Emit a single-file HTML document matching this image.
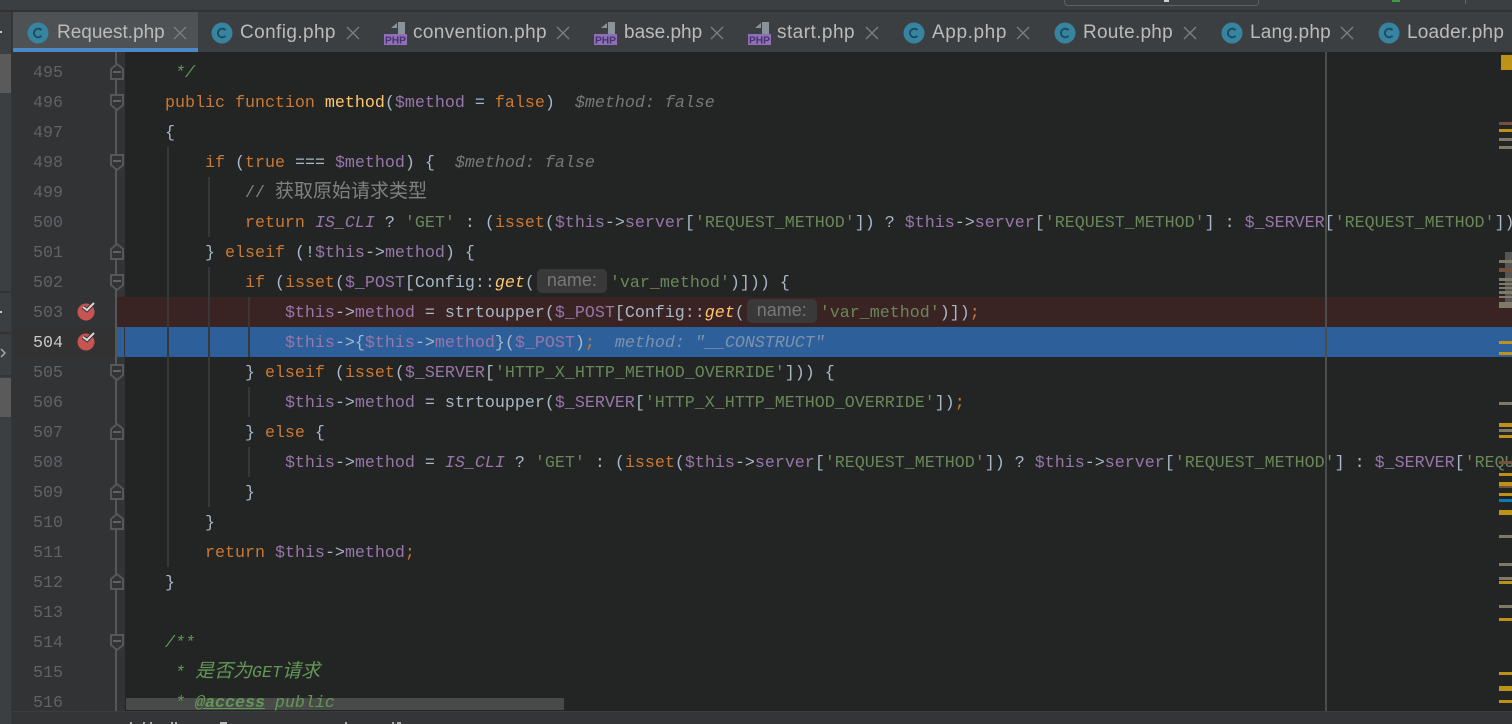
<!DOCTYPE html>
<html><head><meta charset="utf-8">
<style>
html,body{margin:0;padding:0;background:#232525;}
#r{position:relative;width:1512px;height:724px;overflow:hidden;background:#232525;font-family:"Liberation Mono","Noto Sans CJK SC",monospace;}
.a{position:absolute;}
.l{position:absolute;left:125px;margin-top:2px;height:30px;line-height:30px;font-size:16.67px;white-space:pre;color:#a9b7c6;font-family:"Liberation Mono","Noto Sans CJK SC",monospace;}
.n{position:absolute;left:33px;margin-top:2px;height:30px;line-height:30px;font-size:16.67px;color:#606366;}
.k{color:#cc7832}.v{color:#9876aa}.s{color:#6a8759}.f{color:#ffc66d}.g{color:#ffc66d;font-style:italic}
.i{font-style:italic}.c{color:#808080}.d{color:#629755;font-style:italic}
.h{color:#787878;font-style:italic}
.z{font-size:19px;line-height:20px}
.p{display:inline-block;box-sizing:border-box;width:70px;height:24px;background:#393939;border-radius:5px;color:#787878;font:18px/23px "Liberation Sans",sans-serif;text-align:center;vertical-align:1px;margin:0 3px 0 2px;}
.t{position:absolute;top:20px;height:26px;font:19px/26px "Liberation Sans",sans-serif;color:#bbbbbb;white-space:pre;}
.m{position:absolute;left:1499px;width:13px;}
.go{background:#be9117}.gr{background:#7f7a68}.br{background:#74503f}
</style></head><body><div id="r">
<!-- top bar -->
<div class="a" style="left:0;top:0;width:1512px;height:10px;background:#3c3f41"></div>
<div class="a" style="left:0;top:10px;width:1512px;height:2px;background:#323232"></div>
<div class="a" style="left:1064px;top:-8px;width:193px;height:12px;border:1px solid #5e6060;border-radius:4px"></div>
<div class="a" style="left:1164px;top:0;width:5px;height:2px;background:#cfcfcf"></div>
<div class="a" style="left:1392px;top:0;width:8px;height:2px;background:#3f9e42"></div>
<div class="a" style="left:1465px;top:0;width:1px;height:4px;background:#666"></div>
<!-- left strip -->
<div class="a" style="left:0;top:12px;width:13px;height:712px;background:#3c3f41"></div>
<div class="a" style="left:11px;top:12px;width:2px;height:712px;background:#323436"></div>
<div class="a" style="left:0;top:54px;width:11px;height:39px;background:#5a5a5a"></div>
<div class="a" style="left:0;top:378px;width:11px;height:39px;background:#5a5a5a"></div>
<div class="a" style="left:0;top:291px;width:11px;height:2px;background:#323436"></div>
<div class="a" style="left:0;top:332px;width:11px;height:2px;background:#323436"></div>
<div class="a" style="left:0;top:375px;width:11px;height:2px;background:#323436"></div>
<div class="a" style="left:0;top:31px;width:2px;height:2px;background:#c8c8c8"></div>
<div class="a" style="left:0;top:311px;width:2px;height:2px;background:#c8c8c8"></div>
<svg class="a" style="left:0;top:346px" width="8" height="14"><path d="M1 3L5 7L1 11" fill="none" stroke="#b0b0b0" stroke-width="1.3"/></svg>
<!-- tabs -->
<div class="a" style="left:13px;top:12px;width:1499px;height:40px;background:#3c3f41"></div>
<div class="a" style="left:13px;top:12px;width:185px;height:36px;background:#4e5254"></div>
<div class="a" style="left:13px;top:48px;width:185px;height:4px;background:#4a88c7"></div>
<svg class="a" style="left:0;top:12px" width="1512" height="40">
<g fill="#36849f">
<circle cx="38" cy="21" r="10.5"/><circle cx="222" cy="21" r="10.5"/><circle cx="914" cy="21" r="10.5"/><circle cx="1065" cy="21" r="10.5"/><circle cx="1232" cy="21" r="10.5"/><circle cx="1389" cy="21" r="10.5"/>
</g>
<g fill="none" stroke="#1d4a5e" stroke-width="1.8">
<path d="M41.5 18.2A4.3 4.3 0 1 0 41.5 23.8"/><path d="M225.5 18.2A4.3 4.3 0 1 0 225.5 23.8"/><path d="M917.5 18.2A4.3 4.3 0 1 0 917.5 23.8"/><path d="M1068.5 18.2A4.3 4.3 0 1 0 1068.5 23.8"/><path d="M1235.5 18.2A4.3 4.3 0 1 0 1235.5 23.8"/><path d="M1392.5 18.2A4.3 4.3 0 1 0 1392.5 23.8"/>
</g>
<g fill="none" stroke="#7b7e80" stroke-width="1.4">
<path d="M174 15L186 27M186 15L174 27"/><path d="M347 15L359 27M359 15L347 27"/><path d="M557 15L569 27M569 15L557 27"/><path d="M711 15L723 27M723 15L711 27"/><path d="M866 15L878 27M878 15L866 27"/><path d="M1017 15L1029 27M1029 15L1017 27"/><path d="M1184 15L1196 27M1196 15L1184 27"/><path d="M1341 15L1353 27M1353 15L1341 27"/>
</g>
<g fill="#8a9399">
<path d="M391 22V16L397 11V16H391ZM398 10H405V22H398Z"/><path d="M601 22V16L607 11V16H601ZM608 10H615V22H608Z"/><path d="M755 22V16L761 11V16H755ZM762 10H769V22H762Z"/>
</g>
<g fill="#8e6fb8">
<rect x="384" y="22" width="23" height="11"/><rect x="594" y="22" width="23" height="11"/><rect x="748" y="22" width="23" height="11"/>
</g>
<g font-family="Liberation Sans,sans-serif" font-size="10" fill="#46346a" font-weight="bold">
<text x="385" y="31.5" textLength="21" lengthAdjust="spacingAndGlyphs">PHP</text><text x="595" y="31.5" textLength="21" lengthAdjust="spacingAndGlyphs">PHP</text><text x="749" y="31.5" textLength="21" lengthAdjust="spacingAndGlyphs">PHP</text>
</g>
</svg>
<div class="t" style="left:57px">Request.php</div>
<div class="t" style="left:240px;letter-spacing:.4px">Config.php</div>
<div class="t" style="left:413px;letter-spacing:.36px">convention.php</div>
<div class="t" style="left:624px">base.php</div>
<div class="t" style="left:777px;letter-spacing:.45px">start.php</div>
<div class="t" style="left:932px;letter-spacing:.6px">App.php</div>
<div class="t" style="left:1083px;letter-spacing:.25px">Route.php</div>
<div class="t" style="left:1250px;letter-spacing:.2px">Lang.php</div>
<div class="t" style="left:1407px;letter-spacing:.2px">Loader.php</div>
<!-- gutter -->
<div class="a" style="left:13px;top:52px;width:112px;height:659px;background:#313335"></div>
<!-- rows -->
<div class="a" style="left:117px;top:297px;width:1395px;height:30px;background:#3a2323"></div>
<div class="a" style="left:117px;top:327px;width:1395px;height:30px;background:#2d5f9a"></div>
<div class="a" style="left:13px;top:327px;width:104px;height:30px;background:#323232"></div>
<!-- h-scrollbar -->
<div class="a" style="left:126px;top:698px;width:438px;height:12px;background:#484a49"></div>
<!-- guides -->
<div class="a" style="left:124px;top:327px;width:1px;height:30px;background:#313335"></div>
<div class="a" style="left:167px;top:147px;width:2px;height:420px;background:#373939"></div>
<div class="a" style="left:208px;top:177px;width:2px;height:60px;background:#373939"></div>
<div class="a" style="left:208px;top:267px;width:2px;height:240px;background:#373939"></div>
<div class="a" style="left:248px;top:297px;width:2px;height:60px;background:#373939"></div>
<div class="a" style="left:248px;top:387px;width:2px;height:30px;background:#373939"></div>
<div class="a" style="left:248px;top:447px;width:2px;height:30px;background:#373939"></div>
<div class="a" style="left:1325px;top:52px;width:2px;height:659px;background:#4c4e4e"></div>
<!-- line numbers -->
<div class="n" style="top:57px">495</div><div class="n" style="top:87px">496</div><div class="n" style="top:117px">497</div><div class="n" style="top:147px">498</div><div class="n" style="top:177px">499</div><div class="n" style="top:207px">500</div><div class="n" style="top:237px">501</div><div class="n" style="top:267px">502</div><div class="n" style="top:297px">503</div><div class="n" style="top:327px;color:#c8c8c8">504</div><div class="n" style="top:357px">505</div><div class="n" style="top:387px">506</div><div class="n" style="top:417px">507</div><div class="n" style="top:447px">508</div><div class="n" style="top:477px">509</div><div class="n" style="top:507px">510</div><div class="n" style="top:537px">511</div><div class="n" style="top:567px">512</div><div class="n" style="top:597px">513</div><div class="n" style="top:627px">514</div><div class="n" style="top:657px">515</div><div class="n" style="height:22px;overflow:hidden;top:687px">516</div>
<!-- fold + breakpoints -->
<svg class="a" style="left:0;top:52px" width="130" height="659">
<rect x="115" y="0" width="2" height="659" fill="#555759"/>
<g fill="#313335" stroke="#555759" stroke-width="2">
<path d="M111 27V17L117 12L123 17V27Z"/>
<path d="M111 43H123V53L117 58L111 53Z"/>
<path d="M111 103H123V113L117 118L111 113Z"/>
<path d="M111 207V197L117 192L123 197V207Z"/>
<path d="M111 223H123V233L117 238L111 233Z"/>
<path d="M111 313H123V323L117 328L111 323Z"/>
<path d="M111 387V377L117 372L123 377V387Z"/>
<path d="M111 447V437L117 432L123 437V447Z"/>
<path d="M111 477V467L117 462L123 467V477Z"/>
<path d="M111 537V527L117 522L123 527V537Z"/>
<path d="M111 583H123V593L117 598L111 593Z"/>
</g>
<g stroke="#606366" stroke-width="2">
<path d="M113 20H121M113 49H121M113 109H121M113 200H121M113 229H121M113 319H121M113 380H121M113 440H121M113 470H121M113 530H121M113 589H121"/>
</g>
<circle cx="86" cy="260" r="8.5" fill="#c75450"/><circle cx="86" cy="290" r="8.5" fill="#c75450"/>
<path d="M83 255L87 258L94 251" fill="none" stroke="#313335" stroke-width="4"/>
<path d="M83 285L87 288L94 281" fill="none" stroke="#313335" stroke-width="4"/>
<path d="M83 255L87 258L94 251" fill="none" stroke="#d8d8d8" stroke-width="2"/>
<path d="M83 285L87 288L94 281" fill="none" stroke="#d8d8d8" stroke-width="2"/>
</svg>
<!-- code -->
<div class="a" style="left:0;top:0;width:1512px;height:711px;overflow:hidden">
<div class="l" style="top:57px"><span class="d">     */</span></div>
<div class="l" style="top:87px">    <span class="k">public function </span><span class="f">method</span>(<span class="v">$method</span> = <span class="k">false</span>)  <span class="h">$method: false</span></div>
<div class="l" style="top:117px">    {</div>
<div class="l" style="top:147px">        <span class="k">if</span> (<span class="k">true</span> === <span class="v">$method</span>) {  <span class="h">$method: false</span></div>
<div class="l" style="top:177px">            <span class="c">// <span class="z">获取原始请求类型</span></span></div>
<div class="l" style="top:207px">            <span class="k">return</span> <span class="v i">IS_CLI</span> ? <span class="s">'GET'</span> : (<span class="k">isset</span>(<span class="v">$this</span>-&gt;<span class="v">server</span>[<span class="s">'REQUEST_METHOD'</span>]) ? <span class="v">$this</span>-&gt;<span class="v">server</span>[<span class="s">'REQUEST_METHOD'</span>] : <span class="v">$_SERVER</span>[<span class="s">'REQUEST_METHOD'</span>]);</div>
<div class="l" style="top:237px">        } <span class="k">elseif</span> (!<span class="v">$this</span>-&gt;<span class="v">method</span>) {</div>
<div class="l" style="top:267px">            <span class="k">if</span> (<span class="k">isset</span>(<span class="v">$_POST</span>[Config::<span class="g">get</span>(<span class="p">name:</span><span class="s">'var_method'</span>)])) {</div>
<div class="l" style="top:297px">                <span class="v">$this</span>-&gt;<span class="v">method</span> = strtoupper(<span class="v">$_POST</span>[Config::<span class="g">get</span>(<span class="p">name:</span><span class="s">'var_method'</span>)])<span class="k">;</span></div>
<div class="l" style="top:327px">                <span class="v">$this</span>-&gt;{<span class="v">$this</span>-&gt;<span class="v">method</span>}(<span class="v">$_POST</span>)<span class="k">;</span>  <span class="h" style="color:#7c92ad">method: "__CONSTRUCT"</span></div>
<div class="l" style="top:357px">            } <span class="k">elseif</span> (<span class="k">isset</span>(<span class="v">$_SERVER</span>[<span class="s">'HTTP_X_HTTP_METHOD_OVERRIDE'</span>])) {</div>
<div class="l" style="top:387px">                <span class="v">$this</span>-&gt;<span class="v">method</span> = strtoupper(<span class="v">$_SERVER</span>[<span class="s">'HTTP_X_HTTP_METHOD_OVERRIDE'</span>])<span class="k">;</span></div>
<div class="l" style="top:417px">            } <span class="k">else</span> {</div>
<div class="l" style="top:447px">                <span class="v">$this</span>-&gt;<span class="v">method</span> = <span class="v i">IS_CLI</span> ? <span class="s">'GET'</span> : (<span class="k">isset</span>(<span class="v">$this</span>-&gt;<span class="v">server</span>[<span class="s">'REQUEST_METHOD'</span>]) ? <span class="v">$this</span>-&gt;<span class="v">server</span>[<span class="s">'REQUEST_METHOD'</span>] : <span class="v">$_SERVER</span>[<span class="s">'REQUEST_METHOD'</span>]);</div>
<div class="l" style="top:477px">            }</div>
<div class="l" style="top:507px">        }</div>
<div class="l" style="top:537px">        <span class="k">return</span> <span class="v">$this</span>-&gt;<span class="v">method</span><span class="k">;</span></div>
<div class="l" style="top:567px">    }</div>
<div class="l" style="top:627px"><span class="d">    /**</span></div>
<div class="l" style="top:657px"><span class="d">     * <span class="z">是否为</span>GET<span class="z">请求</span></span></div>
<div class="l" style="top:687px"><span class="d">     * <b style="text-decoration:underline">@access</b> public</span></div>
</div>
<!-- stripe -->
<div class="a go" style="left:1501px;top:55px;width:11px;height:15px"></div>
<div class="a" style="left:1505px;top:252px;width:7px;height:53px;background:#555"></div>
<div class="m br" style="top:122px;height:3px"></div><div class="m go" style="top:129px;height:3px"></div><div class="m gr" style="top:138px;height:3px"></div><div class="m gr" style="top:146px;height:3px"></div>
<div class="m gr" style="top:260px;height:3px"></div><div class="m br" style="top:268px;height:4px"></div><div class="m gr" style="top:278px;height:3px"></div><div class="m gr" style="top:283px;height:2px"></div><div class="m gr" style="top:287px;height:2px"></div><div class="m gr" style="top:291px;height:3px"></div><div class="m gr" style="top:296px;height:2px"></div><div class="m gr" style="top:302px;height:6px"></div>
<div class="m go" style="top:341px;height:3px"></div><div class="m go" style="top:352px;height:3px"></div>
<div class="m gr" style="top:402px;height:3px"></div><div class="m go" style="top:423px;height:4px"></div><div class="m gr" style="top:429px;height:3px"></div><div class="m go" style="top:435px;height:3px"></div><div class="m br" style="top:461px;height:3px"></div><div class="m go" style="top:473px;height:3px"></div><div class="m go" style="top:482px;height:4px"></div><div class="m br" style="top:486px;height:2px"></div><div class="m go" style="top:493px;height:3px"></div><div class="m" style="top:499px;height:3px;background:#0a7ab5"></div><div class="m go" style="top:510px;height:5px"></div><div class="m gr" style="top:535px;height:3px"></div><div class="m gr" style="top:563px;height:3px"></div><div class="m gr" style="top:577px;height:3px"></div><div class="m go" style="top:581px;height:3px"></div><div class="m gr" style="top:605px;height:3px"></div><div class="m go" style="top:618px;height:3px"></div><div class="m go" style="top:672px;height:3px"></div><div class="m go" style="top:686px;height:5px"></div><div class="m go" style="top:700px;height:3px"></div>
<!-- bottom bar -->
<div class="a" style="left:11px;top:711px;width:1501px;height:13px;background:#333537"></div>
<div class="a" style="left:11px;top:711px;width:1501px;height:1px;background:#3a3c3e"></div>
<div class="a" style="left:130px;top:722px;width:2px;height:2px;background:#aaa"></div>
<div class="a" style="left:143px;top:722px;width:2px;height:2px;background:#aaa"></div>
<div class="a" style="left:150px;top:722px;width:2px;height:2px;background:#aaa"></div>
<div class="a" style="left:171px;top:722px;width:2px;height:2px;background:#aaa"></div>
<div class="a" style="left:175px;top:722px;width:2px;height:2px;background:#aaa"></div>
<div class="a" style="left:220px;top:722px;width:7px;height:2px;background:#bbb"></div>
<div class="a" style="left:345px;top:722px;width:2px;height:2px;background:#aaa"></div>
<div class="a" style="left:392px;top:722px;width:2px;height:2px;background:#aaa"></div>
<div class="a" style="left:397px;top:722px;width:4px;height:2px;background:#aaa"></div>
</div></body></html>
